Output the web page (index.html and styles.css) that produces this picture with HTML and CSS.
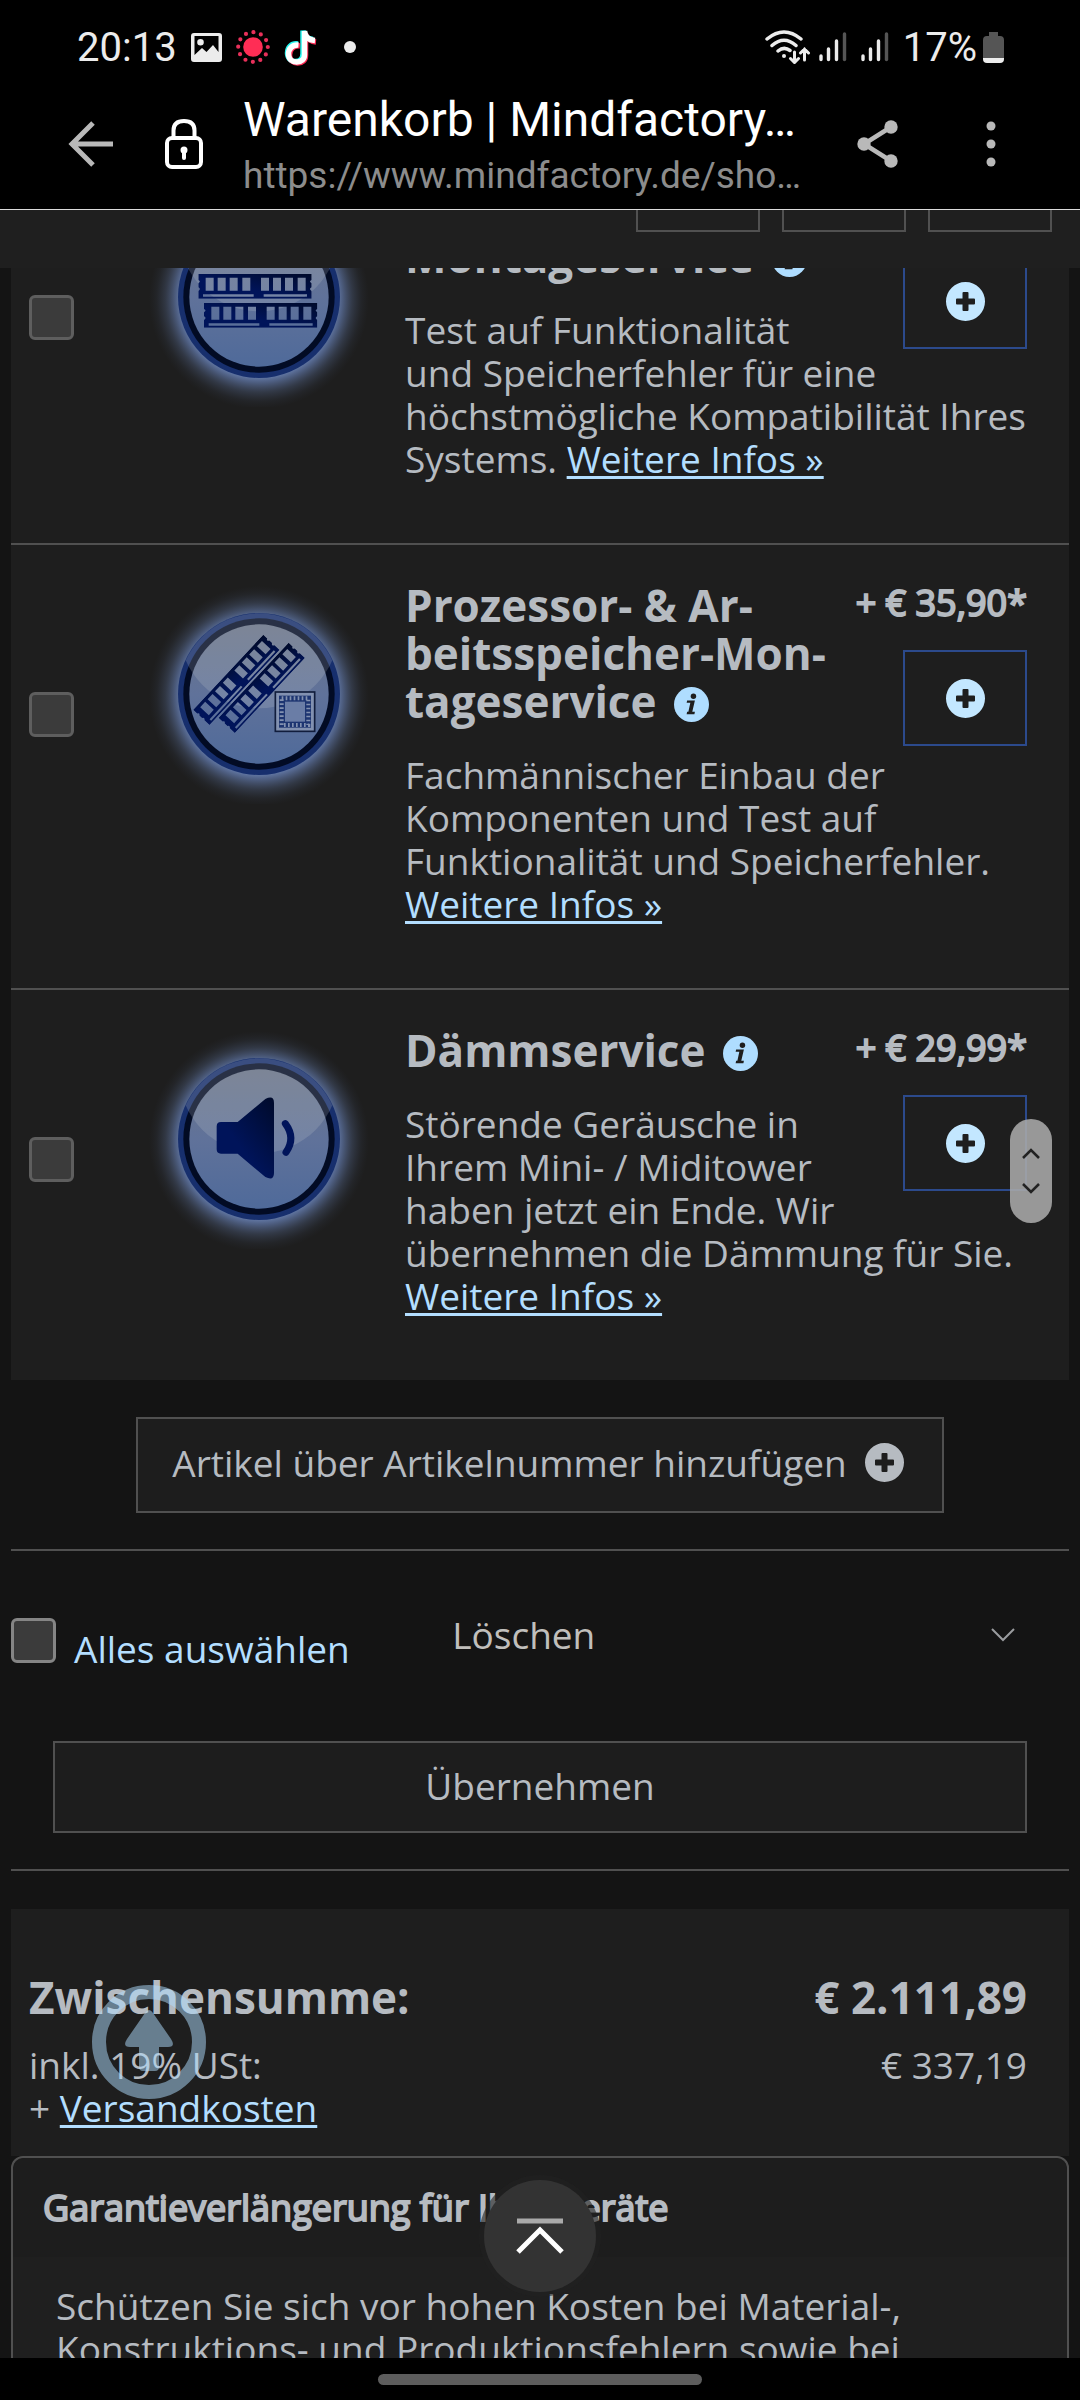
FILE: index.html
```html
<!DOCTYPE html>
<html lang="de">
<head>
    <meta charset="utf-8">
    <meta name="viewport" content="width=device-width, initial-scale=1">
    <title>Warenkorb | Mindfactory</title>
    <link rel="stylesheet" href="styles.css">
</head>
<body>

<!-- Symbole -->
<svg class="defs" aria-hidden="true">
    <defs>
        <radialGradient id="glow">
            <stop offset="0.7" stop-color="#7590c8" stop-opacity="0.85"/>
            <stop offset="0.76" stop-color="#6780b5" stop-opacity="0.65"/>
            <stop offset="0.85" stop-color="#56698f" stop-opacity="0.35"/>
            <stop offset="0.93" stop-color="#4a5a7a" stop-opacity="0.12"/>
            <stop offset="1" stop-color="#3a4660" stop-opacity="0"/>
        </radialGradient>
        <linearGradient id="face" x1="0" y1="0" x2="0" y2="1">
            <stop offset="0" stop-color="#6a7488"/>
            <stop offset="0.5" stop-color="#60729a"/>
            <stop offset="1" stop-color="#4f6a9a"/>
        </linearGradient>
        <linearGradient id="navy" x1="0" y1="1" x2="1" y2="0">
            <stop offset="0.4" stop-color="#00145a"/>
            <stop offset="1" stop-color="#000a2a"/>
        </linearGradient>
        <clipPath id="disc"><circle cx="330" cy="330" r="242"/></clipPath>

        <symbol id="badge" viewBox="0 0 660 660">
            <circle cx="330" cy="336" r="330" fill="url(#glow)"/>
            <circle cx="330" cy="330" r="243" fill="#172f6d"/>
            <circle cx="330" cy="330" r="227" fill="#020b24"/>
            <circle cx="330" cy="330" r="209" fill="url(#face)"/>
            <circle cx="330" cy="133" r="240" fill="#c8ccd4" opacity="0.2" clip-path="url(#disc)"/>
        </symbol>
        <symbol id="ram" viewBox="0 0 340 74">
            <path fill="url(#navy)" fill-rule="evenodd" d="M0 0H340V18Q330 22 340 28V40Q330 45 340 51V74H0V51Q9 45 0 40V28Q9 22 0 18ZM22 11V50H46V11ZM58 11V50H82V11ZM94 11V50H118V11ZM132 11V50H156V11ZM188 11V50H212V11ZM224 11V50H248V11ZM260 11V50H284V11ZM298 11V50H322V11ZM14 61V68H166V61ZM196 61V68H326V61Z"/>
        </symbol>
        <symbol id="plus" viewBox="0 0 39 39">
            <path fill="currentColor" fill-rule="evenodd" d="M19.500 0A19.500 19.500 0 1 1 19.500 39A19.500 19.500 0 1 1 19.500 0ZM17.500 10Q16.500 10 16.500 11V16.500H11Q10 16.500 10 17.500V21.500Q10 22.500 11 22.500H16.500V28Q16.500 29 17.500 29H21.500Q22.500 29 22.500 28V22.500H28Q29 22.500 29 21.500V17.500Q29 16.500 28 16.500H22.500V11Q22.500 10 21.500 10Z"/>
        </symbol>
        <symbol id="info" viewBox="0 0 36 36">
            <circle cx="18" cy="18" r="18" fill="#afddff"/>
            <circle cx="20" cy="9.500" r="2.800" fill="#1e1e1e"/>
            <path fill="#1e1e1e" d="M13.500 14H21.500L18.800 25.500H21.500L21 28H13L13.500 25.500H14.800L16.800 16.300H13Z"/>
        </symbol>
        <symbol id="signal" viewBox="0 0 28 30">
            <g stroke="#ececec" stroke-width="3.400" stroke-linecap="round">
                <path d="M2 24V27.500M9.500 17V27.500M17.500 9V27.500"/>
                <path d="M25.500 2V27.500" stroke="#555"/>
            </g>
        </symbol>
    </defs>
</svg>

<!-- Statusleiste -->
<div class="status">
    <span class="time">20:13</span>
    <svg width="31" height="29" viewBox="0 0 31 29"><path fill="#ececec" fill-rule="evenodd" d="M3 0H28Q31 0 31 3V26Q31 29 28 29H3Q0 29 0 26V3Q0 0 3 0ZM3.500 3V22L11 15L15.500 19L22 12L27.500 19V3ZM9.500 6A3.300 3.300 0 1 1 9.500 12.600A3.300 3.300 0 1 1 9.500 6Z"/></svg>
    <svg width="34" height="34" viewBox="0 0 34 34">
        <circle cx="17" cy="17" r="9.800" fill="#ff2d55"/>
        <circle cx="17" cy="17" r="14.800" fill="none" stroke="#e8305a" stroke-width="4.200" stroke-linecap="round" stroke-dasharray="0 7.749"/>
    </svg>
    <svg width="34" height="37" viewBox="0 0 34 37" fill="none" stroke-width="5.500">
        <path stroke="#25f4ee" d="M14 15C7 14 3.500 19 3.500 24C3.500 29 7 32.500 11.500 32.500C16.500 32.500 19 29 19 24.500V1.500C19.500 7 24 10 29 10.500"/>
        <path stroke="#fe2c55" d="M16 17C9 16 5.500 21 5.500 26C5.500 31 9 34 13.500 34C18.500 34 21.500 31 21.500 26.500V4.500C22 9.500 26.500 12.500 32 13"/>
        <path stroke="#fff" d="M14.500 16C8 15.500 4.500 20 4.500 25C4.500 30 8 33 12.500 33C17.500 33 20.500 30 20.500 25.500V2C21 8 25 11 31 11.500"/>
    </svg>
    <span class="dot"></span>

    <svg class="wifi" width="46" height="34" viewBox="0 0 46 34" fill="none" stroke="#ececec" stroke-width="3.500" stroke-linecap="round">
        <path d="M2 9Q19 -5 36 9M7 15.500Q19 5 31 15.500M13 21Q19 16 25 20.500"/>
        <circle cx="19" cy="26" r="2" fill="#ececec" stroke="none"/>
        <path stroke-width="3" d="M29.500 22V32M25.500 28.500L29.500 32.500L33.500 28.500M39.500 30V19M35.500 23L39.500 19L43.500 23"/>
    </svg>
    <svg width="28" height="30"><use href="#signal"/></svg>
    <svg width="28" height="30"><use href="#signal"/></svg>
    <span class="percent">17%</span>
    <svg width="21" height="31" viewBox="0 0 21 31">
        <path fill="#555" d="M6 0H15V4H17Q21 4 21 8V26H0V8Q0 4 4 4H6Z"/>
        <path fill="#ececec" d="M0 26H21V27Q21 31 17 31H4Q0 31 0 27Z"/>
    </svg>
</div>

<!-- Adressleiste -->
<header class="toolbar">
    <button class="tool" type="button" aria-label="Zurück">
        <svg width="46" height="46" viewBox="0 0 46 46" fill="none" stroke="#b9b9b9" stroke-width="5"><path d="M45 23H4M25 2L4 23L25 44"/></svg>
    </button>
    <svg class="lock" width="40" height="52" viewBox="0 0 40 52" fill="none" stroke="#fff" stroke-width="4">
        <rect x="3" y="20" width="34" height="29" rx="5"/>
        <path d="M9.500 20V12.500Q9.500 3 20 3Q30.500 3 30.500 12.500V20"/>
        <path stroke-linecap="round" d="M20 33V40"/><circle cx="20" cy="32" r="1.500"/>
    </svg>
    <div class="address">
        <div class="page-title">Warenkorb | Mindfactory…</div>
        <div class="page-url">https://www.mindfactory.de/sho…</div>
    </div>
    <button class="tool" type="button" aria-label="Teilen">
        <svg width="42" height="48" viewBox="0 0 42 48" fill="#b9b9b9"><path d="M34 7L7 24L34 41" fill="none" stroke="#b9b9b9" stroke-width="4.500"/><circle cx="34" cy="7" r="6.700"/><circle cx="7" cy="24" r="6.700"/><circle cx="34" cy="41" r="6.700"/></svg>
    </button>
    <button class="tool more" type="button" aria-label="Mehr">
        <svg width="10" height="46" viewBox="0 0 10 46" fill="#b9b9b9"><circle cx="5" cy="5" r="4.500"/><circle cx="5" cy="23" r="4.500"/><circle cx="5" cy="41" r="4.500"/></svg>
    </button>
</header>

<div class="viewport">
    <nav class="shop-nav">
        <button type="button" aria-label="Suche"></button>
        <button type="button" aria-label="Konto"></button>
        <button type="button" aria-label="Menü"></button>
    </nav>

    <main>
        <section class="services">
            <article class="service">
                <input class="check" type="checkbox" aria-label="Montageservice">
                <svg class="picture" viewBox="0 0 660 660">
                    <use href="#badge"/>
                    <use href="#ram" x="148" y="261" width="340" height="74"/>
                    <use href="#ram" x="165" y="348" width="340" height="74"/>
                </svg>
                <div class="details">
                    <div class="actions no-price">
                        <button class="add" type="button" aria-label="Hinzufügen"><svg width="39" height="39"><use href="#plus"/></svg></button>
                    </div>
                    <h2 class="second-line">Montageservice <svg class="info" width="35" height="35"><use href="#info"/></svg></h2>
                    <p>Test auf Funktionalität und&nbsp;Speicherfehler für eine höchstmögliche Kompatibilität Ihres Systems. <a href="#">Weitere Infos »</a></p>
                </div>
            </article>

            <article class="service">
                <input class="check" type="checkbox" aria-label="Prozessor- &amp; Arbeitsspeicher-Montageservice">
                <svg class="picture" viewBox="0 0 660 660">
                    <use href="#badge"/>
                    <g transform="translate(4 18)">
                        <g transform="translate(128 360) rotate(-47)"><use href="#ram" width="310" height="67"/></g>
                        <g transform="translate(204 384) rotate(-47)"><use href="#ram" width="310" height="67"/></g>
                        <rect x="375" y="306" width="118" height="118" fill="#8291b0" stroke="#111d3c" stroke-width="5"/>
                        <rect x="386" y="317" width="96" height="96" fill="#1d3571"/>
                        <rect x="394" y="325" width="80" height="80" fill="none" stroke="#8291b0" stroke-width="12" stroke-dasharray="5 7"/>
                        <rect x="404" y="335" width="60" height="60" fill="#6a7da6"/>
                    </g>
                </svg>
                <div class="details">
                    <div class="actions">
                        <div class="price">+ € 35,90*</div>
                        <button class="add" type="button" aria-label="Hinzufügen"><svg width="39" height="39"><use href="#plus"/></svg></button>
                    </div>
                    <h2>Prozessor- &amp; Ar&shy;beitsspeicher-Mon&shy;tageservice <svg class="info" width="35" height="35"><use href="#info"/></svg></h2>
                    <p>Fachmännischer Einbau der Komponenten und Test auf Funktionalität und Speicherfehler. <a href="#">Weitere Infos »</a></p>
                </div>
            </article>

            <article class="service">
                <input class="check" type="checkbox" aria-label="Dämmservice">
                <svg class="picture" viewBox="0 0 660 660">
                    <use href="#badge"/>
                    <g transform="translate(4 32)">
                        <path fill="url(#navy)" d="M212 247H262L345 178Q371 165 371 190V400Q371 425 345 412L262 342H212Q199 342 199 329V260Q199 247 212 247Z"/>
                        <path fill="none" stroke="#00145a" stroke-width="21" stroke-linecap="round" d="M405 252Q437 295 407 338"/>
                    </g>
                </svg>
                <div class="details">
                    <div class="actions">
                        <div class="price">+ € 29,99*</div>
                        <button class="add" type="button" aria-label="Hinzufügen"><svg width="39" height="39"><use href="#plus"/></svg></button>
                    </div>
                    <h2>Dämmservice <svg class="info" width="35" height="35"><use href="#info"/></svg></h2>
                    <p>Störende Geräusche in Ihrem Mini- / Miditower haben jetzt ein Ende. Wir übernehmen die Dämmung für Sie. <a href="#">Weitere Infos »</a></p>
                </div>
            </article>
        </section>

        <div class="add-article">
            <button class="btn" type="button">Artikel über Artikelnummer hinzufügen <svg width="39" height="39"><use href="#plus"/></svg></button>
        </div>

        <form class="bulk">
            <div class="bulk-row">
                <label class="select-all"><input class="check" type="checkbox"> Alles auswählen</label>
                <div class="select-box">
                    <select aria-label="Aktion">
                        <option>Löschen</option>
                    </select>
                    <svg class="chevron" width="24" height="14" viewBox="0 0 24 14" fill="none" stroke="#9a9c9f" stroke-width="2"><path d="M1 1L12 12L23 1"/></svg>
                </div>
            </div>
            <button class="btn apply" type="button">Übernehmen</button>
        </form>

        <section class="totals">
            <div class="total-row sum"><span>Zwischensumme:</span><span>€ 2.111,89</span></div>
            <div class="total-row"><span>inkl. 19% USt:</span><span>€ 337,19</span></div>
            <div>+ <a href="#">Versandkosten</a></div>
        </section>

        <section class="warranty">
            <h3>Garantieverlängerung für Ihre Geräte</h3>
            <p>Schützen Sie sich vor hohen Kosten bei Material-, Konstruktions- und Produktionsfehlern sowie bei</p>
        </section>
    </main>

    <!-- schwebende Elemente -->
    <div class="scroll-thumb">
        <svg width="18" height="46" viewBox="0 0 18 46" fill="none" stroke="#222" stroke-width="2.500"><path d="M1 10L9 2L17 10M1 36L9 44L17 36"/></svg>
    </div>
    <button class="page-up" type="button" aria-label="Nach oben">
        <svg width="114" height="114" viewBox="0 0 114 114"><circle cx="57" cy="57" r="50" fill="none" stroke="#afddff" stroke-width="14"/><path fill="#afddff" d="M53 28Q57 22 61 28L79 54Q84 62 76 62H67V82Q67 86 63 86H51Q47 86 47 82V62H38Q30 62 35 54Z"/></svg>
    </button>
    <button class="go-top" type="button" aria-label="Zum Seitenanfang">
        <svg width="48" height="38" viewBox="0 0 48 38" fill="none"><path stroke="#aaa" stroke-width="5" d="M1 4H47"/><path stroke="#fff" stroke-width="5" d="M2 35L24 13L46 35"/></svg>
    </button>
</div>

<footer class="gesture-bar"><span></span></footer>

</body>
</html>
```
FILE: styles.css
```css
*{box-sizing: border-box;}

body{
    margin: 0;
    height: 100vh;
    display: flex;flex-direction: column;
    background: #000;color: #b6bbc1;
    font-family: "Open Sans", sans-serif;font-size: 37px;line-height: 43px;
    overflow: hidden;
}

button{padding: 0;border: none;background: none;color: inherit;font: inherit;}
svg{display: block;flex: none;}
a{color: #b3deff;text-decoration-thickness: 3px;text-underline-offset: 3px;}
h2,h3,p{margin: 0;}

.defs{position: absolute;width: 0;height: 0;}

/* Statusleiste */
.status{
    height: 94px;padding: 0 76px 0 77px;
    display: flex;align-items: center;gap: 14px;
    color: #ececec;
    font-family: Roboto, sans-serif;font-size: 40px;
}
.dot{width: 12px;height: 12px;margin-left: 12px;border-radius: 50%;background: #ececec;}
.wifi{margin-left: auto;margin-right: -6px;}
.percent{margin-right: -8px;}

/* Adressleiste */
.toolbar{
    height: 116px;padding: 0 84px 16px 68px;
    display: flex;align-items: center;
    border-bottom: 1px solid #dcdcdc;
    font-family: Roboto, sans-serif;
}
.lock{margin-left: 50px;margin-right: 39px;}
.address{flex: 1;min-width: 0;white-space: nowrap;}
.page-title{padding-top: 2px;font-size: 48px;line-height: 62px;color: #fff;}
.page-url{font-size: 37px;line-height: 50px;color: #8c8c8c;}
.more{margin-left: 87px;}

.viewport{
    position: relative;
    flex: 1;min-height: 0;
    background: #141414;
    overflow: hidden;
}

/* Kopfzeile des Shops */
.shop-nav{
    position: relative;z-index: 2;
    height: 58px;padding-right: 28px;
    display: flex;justify-content: flex-end;gap: 22px;
    background: #1f1f1f;
}
.shop-nav button{
    width: 124px;height: 22px;
    border: 2px solid #505050;border-top: none;
}

main{margin: -120px 11px 0;}

/* Serviceliste */
.service{
    display: flex;align-items: flex-start;
    padding: 36px 42px 63px 18px;
    background: #1e1e1e;
}
.service + .service{border-top: 2px solid #505050;}

.check{
    appearance: none;
    flex: none;
    width: 45px;height: 45px;margin: 0;
    border: 3px solid #5e5e5e;border-radius: 6px;
    background: #3b3b3b;
}
.service .check{margin-top: 111px;}

.picture{width: 220px;height: 220px;margin: 3px 36px 0 75px;}

.details{flex: 1;min-width: 0;}
.actions{
    float: right;
    margin-left: 16px;
    display: flex;flex-direction: column;align-items: flex-end;gap: 26px;
}
.no-price{padding-top: 69px;}
.price,.warranty h3{-webkit-text-stroke: 2px currentColor;font-size: 36px;}

.add{
    width: 124px;height: 96px;
    display: flex;align-items: center;justify-content: center;
    border: 2px solid #2c4a8c;
    color: #c3e7ff;
}

h2{margin-bottom: 28px;font-size: 44px;line-height: 48px;font-weight: 700;}
.second-line{padding-top: 48px;}
.info{display: inline-block;margin-left: 6px;vertical-align: -4px;}

/* Artikel hinzufügen */
.btn{
    padding-bottom: 4px;
    display: flex;align-items: center;justify-content: center;gap: 18px;
    border: 2px solid #505050;
    background: #1d1d1d;
}
.add-article{
    padding: 37px 0 36px;
    display: flex;justify-content: center;
    border-bottom: 2px solid #505050;
}
.add-article .btn{height: 96px;padding: 0 38px 6px 34px;}

/* Auswahl */
.bulk{
    padding-top: 38px;padding-bottom: 36px;
    border-bottom: 2px solid #505050;
}
.bulk-row{display: flex;justify-content: space-between;}
.select-all{
    padding-top: 29px;
    display: flex;align-items: baseline;gap: 18px;
    color: #b3deff;
}
.select-all .check{border-color: #858585;}
.select-box{position: relative;width: calc(60% - 18px);}
.select-box select{
    appearance: none;
    width: 100%;height: 92px;padding: 0 0 2px;
    border: none;background: #141414;
    color: #c0bfbc;font: inherit;
}
.chevron{position: absolute;right: 54px;top: 39px;}
.apply{
    width: calc(100% - 84px);height: 92px;
    margin: 60px 42px 0;
}

/* Summen */
.totals{
    margin-top: 38px;
    padding: 64px 42px 27px 18px;
    background: #1e1e1e;
}
.total-row{display: flex;justify-content: space-between;}
.sum{margin-bottom: 22px;font-size: 44px;line-height: 48px;font-weight: 700;}

/* Garantie */
.warranty{
    border: 2px solid #505050;border-radius: 12px;
    background: #1f1f1f;
}
.warranty h3{
    padding: 28px 30px;
    border-radius: 12px 12px 0 0;
    background: #1d1d1d;
    font-weight: 400;
}
.warranty p{padding: 27px 43px;}

/* schwebende Elemente */
.scroll-thumb{
    position: absolute;right: 28px;top: 909px;z-index: 3;
    width: 42px;height: 104px;
    display: flex;align-items: center;justify-content: center;
    border-radius: 21px;
    background: rgba(170, 170, 170, 0.88);
}
.page-up{position: absolute;left: 92px;bottom: 259px;opacity: 0.5;}
.go-top{
    position: absolute;left: 50%;bottom: 66px;
    width: 112px;height: 112px;margin-left: -56px;
    display: flex;align-items: center;justify-content: center;
    border-radius: 50%;
    background: #333;
    box-shadow: 0 0 0 5px rgba(34, 34, 34, 0.6);
}

/* Gestenleiste */
.gesture-bar{
    height: 42px;
    padding-top: 16px;
}
.gesture-bar span{
    display: block;
    width: 30%;height: 11px;margin: 0 auto;
    border-radius: 6px;
    background: #5d5d5d;
}
```
